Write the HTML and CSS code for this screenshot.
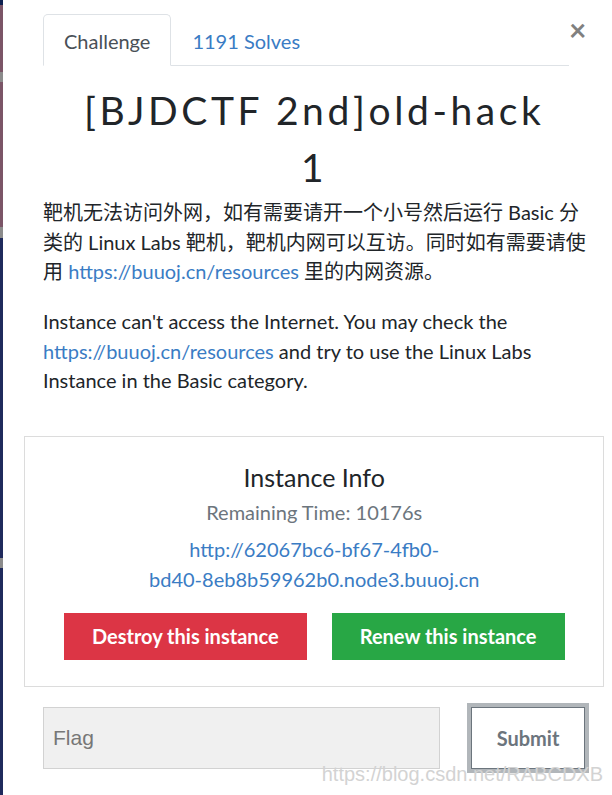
FILE: index.html
```html
<!DOCTYPE html>
<html lang="zh">
<head>
    <meta charset="UTF-8">
    <meta name="viewport" content="width=device-width, initial-scale=1.0">
    <title>[BJDCTF 2nd]old-hack 1</title>
    <link rel="stylesheet" href="styles.css">
</head>
<body>
    <div class="page">
        <div class="backdrop-edge"></div>

        <div class="modal">
            <div class="modal-header">
                <nav class="tabs">
                    <a class="tab active" href="#">Challenge</a>
                    <a class="tab" href="#">1191 Solves</a>
                </nav>
                <button class="close" type="button">&times;</button>
            </div>

            <div class="modal-body">
                <h2 class="challenge-name">[BJDCTF 2nd]old-hack 1</h2>

                <div class="description">
                    <p>靶机无法访问外网，如有需要请开一个小号然后运行 Basic 分类的 Linux Labs 靶机，靶机内网可以互访。同时如有需要请使用 <a href="#">https://buuoj.cn/resources</a> 里的内网资源。</p>
                    <p>Instance can't access the Internet. You may check the <a href="#">https://buuoj.cn/resources</a> and try to use the Linux Labs Instance in the Basic category.</p>
                </div>

                <div class="instance-box">
                    <h4 class="instance-title">Instance Info</h4>
                    <p class="remaining">Remaining Time: 10176s</p>
                    <p class="instance-url"><a href="#">http://62067bc6-bf67-4fb0-<br>bd40-8eb8b59962b0.node3.buuoj.cn</a></p>
                    <div class="instance-actions">
                        <button class="btn btn-danger" type="button">Destroy this instance</button>
                        <button class="btn btn-success" type="button">Renew this instance</button>
                    </div>
                </div>

                <form class="flag-form" onsubmit="return false">
                    <input class="flag-input" type="text" placeholder="Flag">
                    <button class="submit-button" type="submit">Submit</button>
                </form>
            </div>
        </div>

        <div class="watermark">https://blog.csdn.net/RABCDXB</div>
    </div>
</body>
</html>
```

FILE: styles.css
```css
html, body {
    height: 100%;
    margin: 0;
    overflow: hidden;
    background-color: #fff;
    font-family: Lato, "Noto Sans CJK SC", sans-serif;
    color: #212529;
}

.page {
    display: flex;
    height: 100%;
    position: relative;
}

/* bit of the page behind the modal */
.backdrop-edge {
    width: 3px;
    flex-shrink: 0;
    background: linear-gradient(to bottom,
        #0e2150 0, #0e2150 5px,
        #7b5567 5px, #7b5567 72px,
        #8b8b8b 72px, #8b8b8b 82px,
        #7b5567 82px, #7b5567 227px,
        #8b8b8b 227px, #8b8b8b 238px,
        #1f2a5c 238px, #1f2a5c 558px,
        #8b8b8b 558px, #8b8b8b 568px,
        #1f2a5c 568px);
}

.modal {
    flex: 1;
}

a {
    color: #3a7cc4;
    text-decoration: none;
}

.modal-header {
    display: flex;
    align-items: flex-start;
    padding: 14px 0 0 40px;
}

.tabs {
    display: flex;
    width: 526px;
    border-bottom: 1px solid #dee2e6;
}

.tab {
    padding: 0 20px;
    height: 50px;
    line-height: 52px;
    font-size: 20px;
    border: 1px solid transparent;
    border-radius: 5px 5px 0 0;
    margin-bottom: -1px;
}

.tab.active {
    color: #495057;
    border-color: #dee2e6 #dee2e6 #fff;
}

.close {
    margin: 0 26px 0 auto;
    padding: 0;
    border: 0;
    background: none;
    font-family: Lato, sans-serif;
    font-size: 30px;
    font-weight: bold;
    line-height: 30px;
    color: #808080;
}

.modal-body {
    padding: 0 8px 0 21px;
}

.challenge-name {
    margin: 16px 0 0;
    padding: 0 50px;
    text-align: center;
    font-size: 39px;
    font-weight: 400;
    line-height: 57px;
    letter-spacing: 3.6px;
    color: #212529;
}

.description {
    padding: 2px 16px 0 19px;
    font-size: 20px;
    line-height: 29.5px;
}

.description p {
    margin: 0 0 20.5px;
}

.instance-box {
    margin-top: 40px;
    border: 1px solid #dcdcdc;
    padding: 22px 0 26px;
    text-align: center;
}

.instance-title {
    margin: 0;
    font-size: 25px;
    font-weight: 400;
    line-height: 36px;
    color: #212529;
}

.remaining {
    margin: 2px 0 0;
    font-size: 20px;
    line-height: 30px;
    color: #6c757d;
}

.instance-url {
    margin: 7px 0 0;
    font-size: 20px;
    line-height: 30px;
}

.instance-actions {
    display: flex;
    justify-content: center;
    gap: 25px;
    margin-top: 19px;
}

.btn {
    height: 47px;
    padding: 0 28px;
    border: 0;
    color: #fff;
    font-family: Lato, sans-serif;
    font-size: 20px;
    font-weight: bold;
}

.btn-danger {
    background-color: #dc3545;
}

.btn-success {
    background-color: #28a745;
}

.flag-form {
    display: flex;
    align-items: center;
    gap: 27px;
    margin-top: 16px;
    padding-left: 19px;
}

.flag-input {
    width: 397px;
    height: 62px;
    box-sizing: border-box;
    border: 1px solid #d2d2d2;
    background-color: #f0f0f0;
    padding: 0 9px;
    font-family: "Liberation Sans Narrow", "Liberation Sans", sans-serif;
    font-size: 21px;
}

.flag-input::placeholder {
    color: #777;
}

.submit-button {
    width: 122px;
    height: 70px;
    box-sizing: border-box;
    border: 4px solid #b1b6ba;
    box-shadow: inset 0 0 0 1px #6c757d;
    background-color: #fff;
    font-family: Lato, sans-serif;
    font-size: 20px;
    font-weight: bold;
    color: #6c757d;
}

.watermark {
    position: absolute;
    right: 9px;
    bottom: 9px;
    font-family: "Liberation Sans", Arial, sans-serif;
    font-size: 20px;
    color: #d3d3d3;
}
```
